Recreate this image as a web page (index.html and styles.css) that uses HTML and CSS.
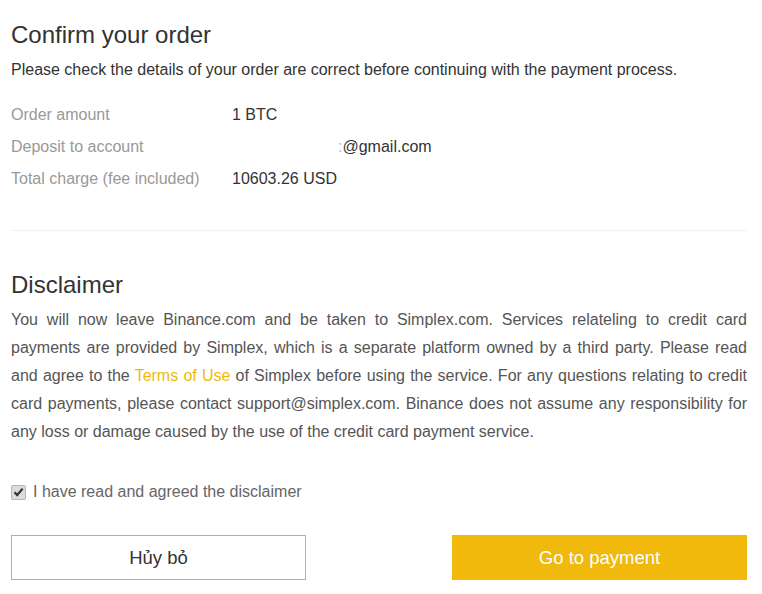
FILE: index.html
```html
<!DOCTYPE html>
<html lang="en">
<head>
    <meta charset="UTF-8">
    <meta name="viewport" content="width=device-width, initial-scale=1.0">
    <title>Confirm your order</title>
    <link rel="stylesheet" href="styles.css">
</head>
<body>
    <div class="container">
        <section class="order">
            <h1>Confirm your order</h1>
            <p class="intro">Please check the details of your order are correct before continuing with the payment process.</p>
            <div class="details">
                <div class="row">
                    <span class="label">Order amount</span>
                    <span class="value">1 BTC</span>
                </div>
                <div class="row">
                    <span class="label">Deposit to account</span>
                    <span class="value"><span class="hidden-part"></span><span class="faint">:</span>@gmail.com</span>
                </div>
                <div class="row">
                    <span class="label">Total charge (fee included)</span>
                    <span class="value">10603.26 USD</span>
                </div>
            </div>
        </section>

        <hr class="divider">

        <section class="disclaimer">
            <h2>Disclaimer</h2>
            <p class="text">You will now leave Binance.com and be taken to Simplex.com. Services relateling to credit card payments are provided by Simplex, which is a separate platform owned by a third party. Please read and agree to the <a href="#" class="link">Terms of Use</a> of Simplex before using the service. For any questions relating to credit card payments, please contact support@simplex.com. Binance does not assume any responsibility for any loss or damage caused by the use of the credit card payment service.</p>
            <label class="agree">
                <span class="checkbox">
                    <svg width="11" height="10" viewBox="0 0 11 10"><path d="M1.5 5.2 L4.2 8 L9.6 1.6" fill="none" stroke="#333" stroke-width="2.2"/></svg>
                </span>
                I have read and agreed the disclaimer
            </label>
        </section>

        <div class="actions">
            <button type="button" class="btn btn-cancel">Hủy bỏ</button>
            <button type="button" class="btn btn-pay">Go to payment</button>
        </div>
    </div>
</body>
</html>
```

FILE: styles.css
```css
body {
    margin: 0;
    background-color: white;
    font-family: "Liberation Sans", Arial, sans-serif;
    font-size: 16px;
    color: #333;
}
.container {
    width: 736px;
    padding: 20px 0 0 11px;
}
h1, h2 {
    margin: 0;
    font-size: 24px;
    font-weight: normal;
    line-height: 30px;
    color: #333;
}
.intro {
    margin: 10px 0 0;
    line-height: 20px;
    color: #333;
}
.details {
    margin-top: 19px;
}
.row {
    display: flex;
    line-height: 32px;
}
.label {
    width: 221px;
    color: #999;
}
.value {
    color: #333;
}
.hidden-part {
    display: inline-block;
    width: 106px;
}
.faint {
    color: #bbb;
}
.divider {
    margin: 35px 0 0;
    border: none;
    border-top: 1px solid #f2f2f2;
}
.disclaimer {
    margin-top: 39px;
}
.text {
    margin: 6px 0 0;
    line-height: 28px;
    text-align: justify;
    color: #555;
}
.link {
    color: #f0b90b;
    text-decoration: none;
}
.agree {
    display: flex;
    align-items: center;
    gap: 7px;
    margin-top: 36px;
    line-height: 20px;
    color: #666;
}
.checkbox {
    display: flex;
    align-items: center;
    justify-content: center;
    width: 13px;
    height: 13px;
    border: 1px solid #b5b5b5;
    border-radius: 2px;
    background-color: #dcdcdc;
}
.actions {
    display: flex;
    justify-content: space-between;
    margin-top: 33px;
}
.btn {
    width: 295px;
    height: 45px;
    font-family: inherit;
    font-size: 18.5px;
    cursor: pointer;
}
.btn-cancel {
    background-color: white;
    border: 1px solid #a9b0b8;
    color: #333;
}
.btn-pay {
    background-color: #f0b90b;
    border: none;
    color: white;
}
```
